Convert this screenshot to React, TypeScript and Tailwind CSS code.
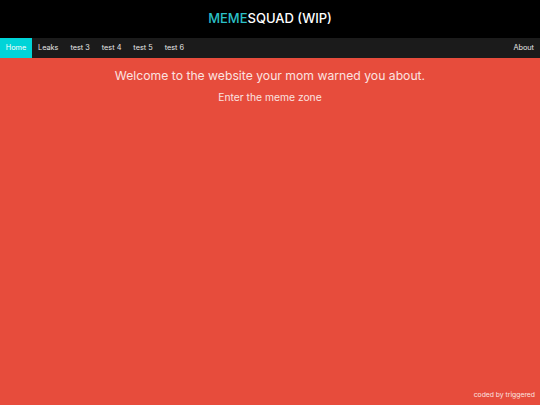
import React from 'react';

const links = ['Leaks', 'test 3', 'test 4', 'test 5', 'test 6'];

const App: React.FC = () => {
  return (
    <div className="min-h-screen flex flex-col bg-[#e74c3c] font-['Inter',sans-serif] text-white">
      <header className="h-[38px] bg-black flex items-center justify-center">
        <h1 className="text-[13px] font-medium">
          <span className="text-[#2bc0c8]">MEME</span>SQUAD (WIP)
        </h1>
      </header>

      <nav className="h-[20px] bg-[#1b1b1b] flex items-stretch text-[7.3px]">
        <a className="bg-[#00d4d8] w-[32px] flex items-center justify-center">Home</a>
        {links.map((l) => (
          <a key={l} className="px-[6px] flex items-center text-[#e6e6e6]">
            {l}
          </a>
        ))}
        <a className="ml-auto pr-[6px] flex items-center text-[#e6e6e6]">About</a>
      </nav>

      <main className="flex-1 flex flex-col items-center pt-[9px] text-[#fbe3e0]">
        <p className="text-[12.2px] leading-[17px]">Welcome to the website your mom warned you about.</p>
        <p className="text-[10.3px] mt-[7px] leading-[12px]">Enter the meme zone</p>
      </main>

      <footer className="flex justify-end pr-[5px] pb-[5px] text-[6.8px] text-[#fbe3e0]">
        coded by triggered
      </footer>
    </div>
  );
};

export default App;
